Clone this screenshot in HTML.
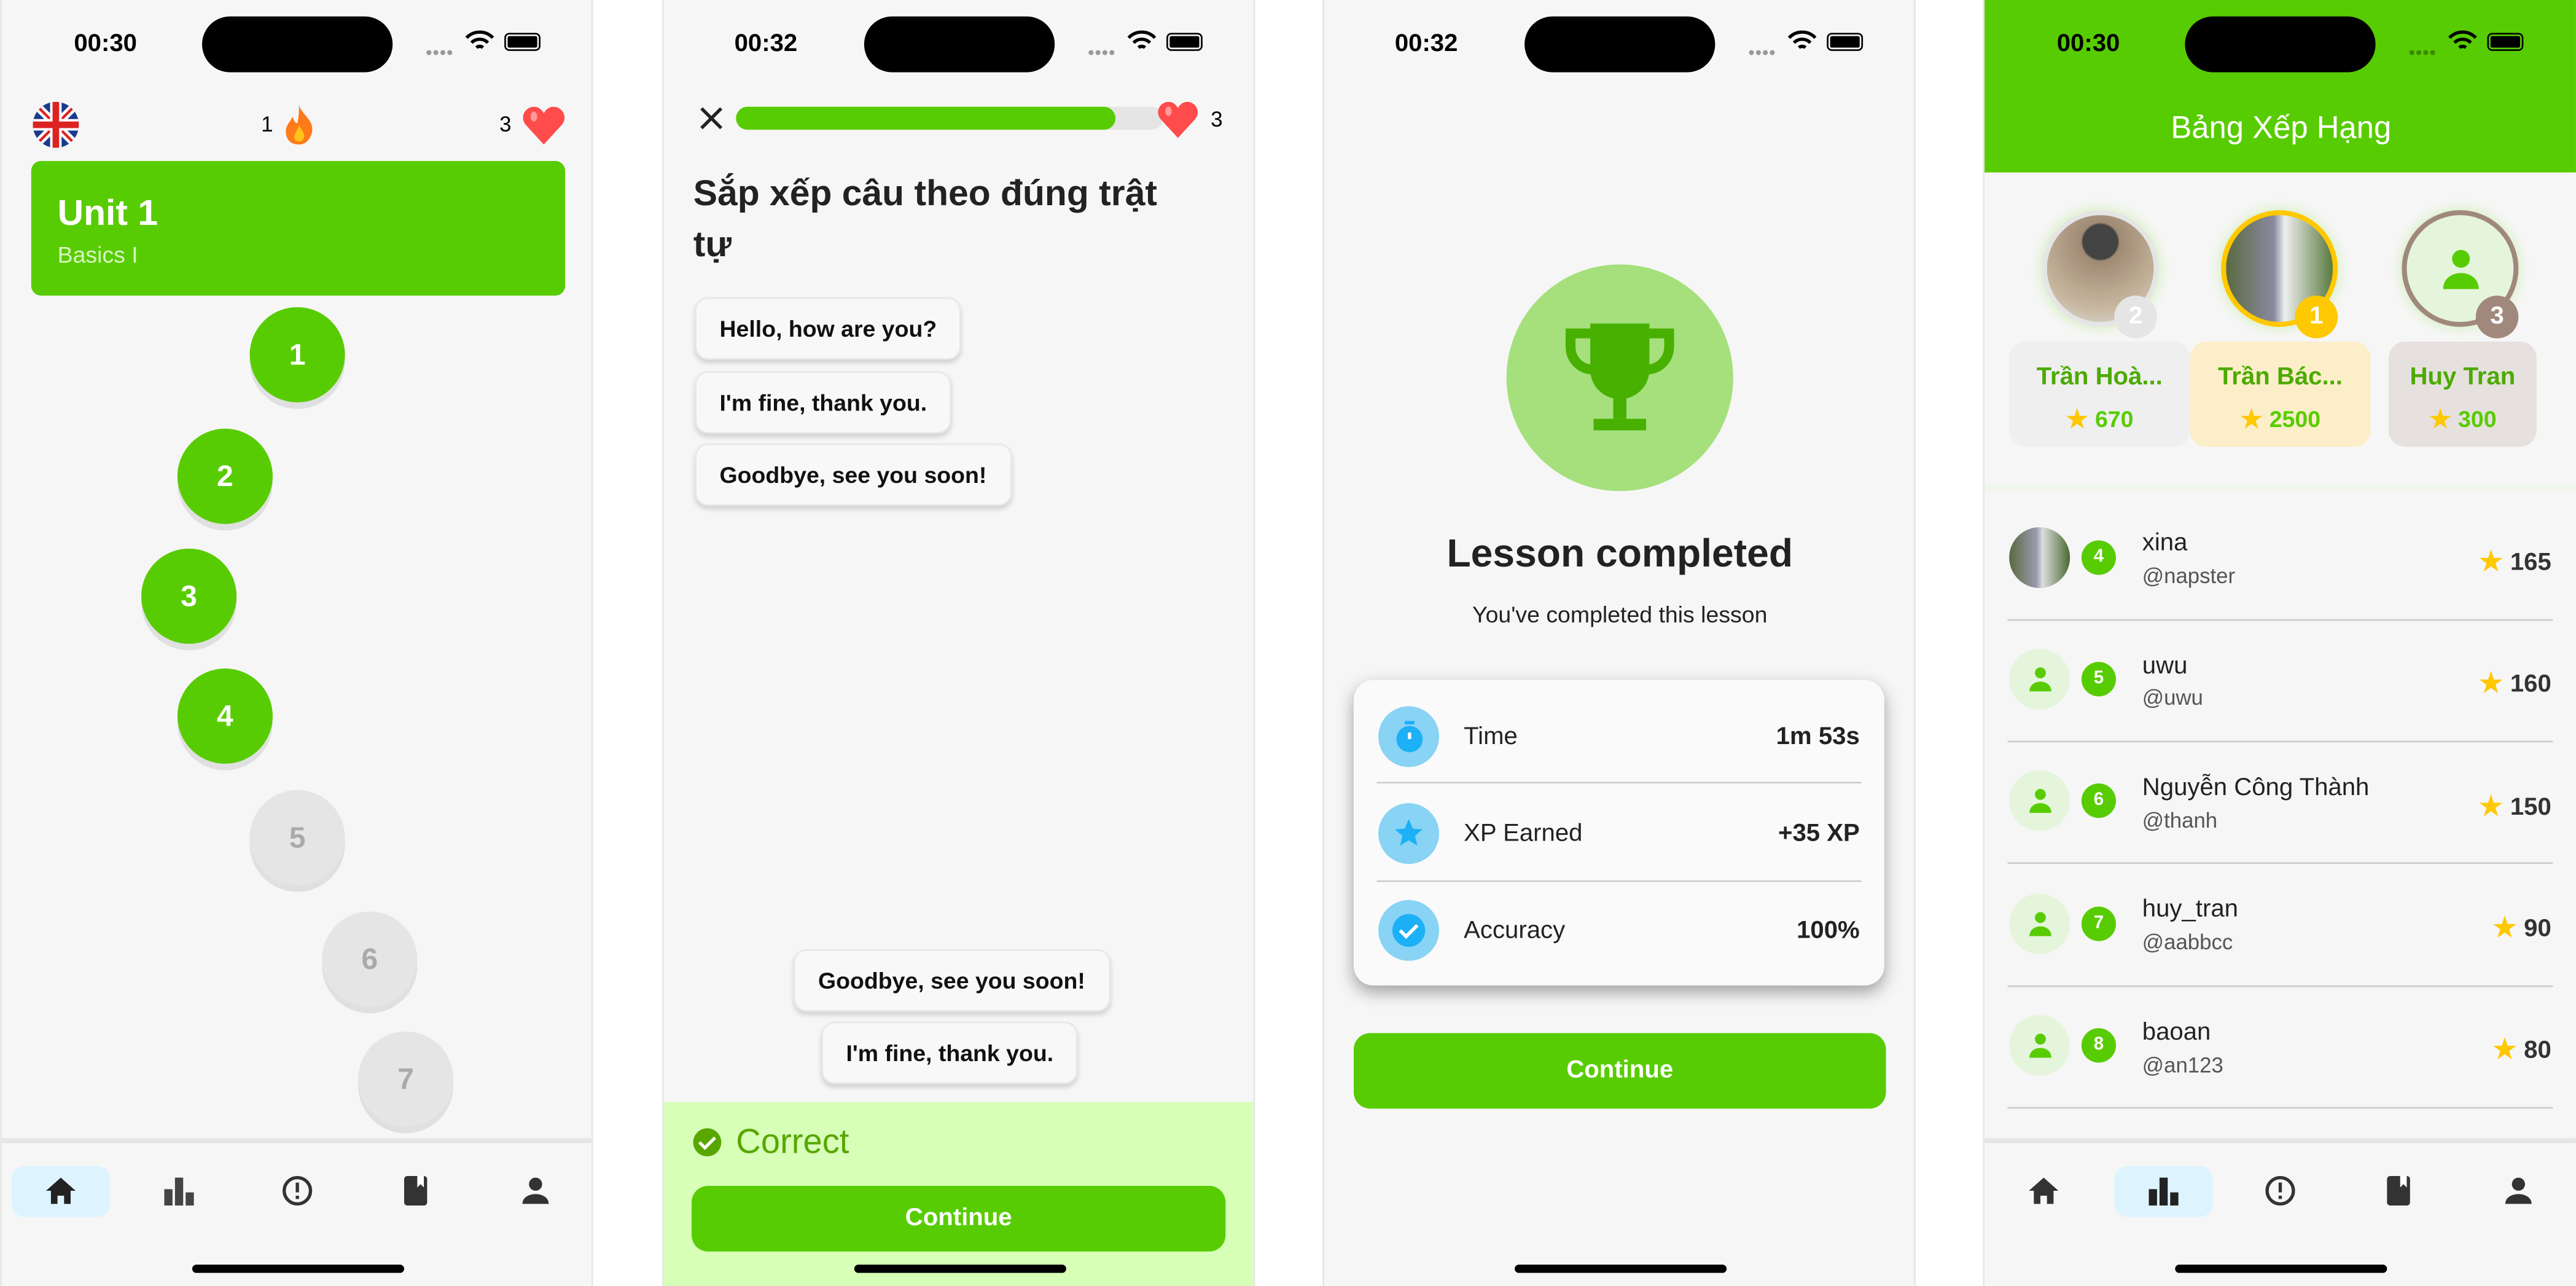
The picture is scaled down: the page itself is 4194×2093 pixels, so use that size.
<!DOCTYPE html>
<html><head><meta charset="utf-8"><style>
*{margin:0;padding:0;box-sizing:border-box}
html,body{width:4194px;height:2093px;overflow:hidden;background:#fff}
#w{position:absolute;left:0;top:0;width:1568px;height:783px;transform:scale(2.6747,2.6731);transform-origin:0 0;font-family:"Liberation Sans","Noto Sans CJK SC",sans-serif}
.p{position:absolute;top:0;width:361px;height:783px;background:#f6f6f6;overflow:hidden;border-left:1px solid #e6e6e6;border-right:1px solid #e6e6e6}
.a{position:absolute}
.time{position:absolute;top:18px;font-size:15px;font-weight:bold;color:#000}
.isl{position:absolute;left:122px;top:10px;width:116px;height:34px;border-radius:17px;background:#000}
.sig{position:absolute;left:258px;top:29px;font-size:7px;color:#999;letter-spacing:0px}
.bat{position:absolute;left:306px;top:20px;width:22px;height:11px;border:1.5px solid #000;border-radius:3px;padding:1px}
.bat i{display:block;width:100%;height:100%;background:#000;border-radius:1px}
.c{position:absolute;width:58px;height:58px;border-radius:50%;background:#58cc02;color:#fff;font-weight:bold;font-size:18px;display:flex;align-items:center;justify-content:center;box-shadow:0 4px 0 #e0e0e0}
.c.g{background:#e5e5e5;color:#aaa}
.nav{position:absolute;left:0;top:693px;width:361px;height:90px;background:#f6f6f6;border-top:3px solid #e5e5e5}
.hb{position:absolute;left:116px;top:770px;width:129px;height:5px;border-radius:3px;background:#000}
.chip{position:absolute;background:#f8f8f8;border-radius:8px;box-shadow:0 2px 3px rgba(0,0,0,.15);border:1px solid #e8e8e8;font-size:14px;font-weight:bold;color:#111;padding:0 14px;height:38px;line-height:36px}
.row{position:absolute;left:14px;width:332px;height:74px;border-bottom:1px solid #ccc}
</style></head><body><div id="w">

<!-- Panel 1 -->
<div class="p" style="left:0">
<div class="time" style="left:44px">00:30</div><div class="isl"></div><div class="sig">●●●●</div>
<svg class="a" style="left:282px;top:18px" width="18" height="14" viewBox="0 0 18 14"><path d="M1 5a11 11 0 0 1 16 0M4 8a7 7 0 0 1 10 0M7 11a3 3 0 0 1 4 0" stroke="#000" stroke-width="2" fill="none"/></svg>
<div class="bat"><i></i></div>
<svg class="a" style="left:19px;top:62px" width="28" height="28" viewBox="0 0 28 28"><clipPath id="cc"><circle cx="14" cy="14" r="14"/></clipPath><g clip-path="url(#cc)"><rect width="28" height="28" fill="#1a3a8a"/><path d="M0 0L28 28M28 0L0 28" stroke="#fff" stroke-width="5"/><path d="M0 0L28 28M28 0L0 28" stroke="#d22" stroke-width="1.6"/><path d="M14 0V28M0 14H28" stroke="#fff" stroke-width="7"/><path d="M14 0V28M0 14H28" stroke="#d22" stroke-width="4"/></g></svg>
<div class="a" style="left:158px;top:68px;font-size:13px">1</div>
<svg class="a" style="left:171px;top:64px" width="20" height="24" viewBox="0 0 20 24"><path d="M10 0C12 6 19 9 18 16C17 21 14 24 10 24C5 24 2 21 2 16C2 12 5 10 6 7C7 10 8 11 9 11C10 7 10 3 10 0Z" fill="#ff7a1a"/><path d="M10 12C11 15 14 17 13 20C12 23 8 23 7 20C7 17 9 16 10 12Z" fill="#ffc21a"/></svg>
<div class="a" style="left:303px;top:68px;font-size:13px">3</div>
<svg class="a" style="left:317px;top:65px" width="26" height="23" viewBox="0 0 26 23"><path d="M13 23L2 11C-2 6 2 0 7 0C10 0 12 2 13 4C14 2 16 0 19 0C24 0 28 6 24 11Z" fill="#ff4b4b"/><ellipse cx="7" cy="6" rx="2" ry="3" fill="#ff9a9a"/></svg>
<div class="a" style="left:18px;top:98px;width:325px;height:82px;background:#58cc02;border-radius:6px"></div>
<div class="a" style="left:34px;top:117px;font-size:22px;font-weight:bold;color:#fff">Unit 1</div>
<div class="a" style="left:34px;top:147px;font-size:14px;color:#d8f5c0">Basics I</div>
<div class="c" style="left:151px;top:187px">1</div>
<div class="c" style="left:107px;top:261px">2</div>
<div class="c" style="left:85px;top:334px">3</div>
<div class="c" style="left:107px;top:407px">4</div>
<div class="c g" style="left:151px;top:481px">5</div>
<div class="c g" style="left:195px;top:555px">6</div>
<div class="c g" style="left:217px;top:628px">7</div>
<div class="nav">
<div class="a" style="left:6px;top:14px;width:60px;height:31px;border-radius:8px;background:#ddf4ff"></div>
<svg class="a" style="left:26px;top:20px" width="20" height="18" viewBox="0 0 20 18"><path d="M10 1L1 9h3v8h4v-5h4v5h4V9h3Z" fill="#222"/></svg>
<svg class="a" style="left:98px;top:20px" width="20" height="18" viewBox="0 0 20 18"><path d="M1 8h5v10H1ZM7.5 1h5v17h-5ZM14 10h5v8h-5Z" fill="#444"/></svg>
<svg class="a" style="left:170px;top:19px" width="20" height="20" viewBox="0 0 20 20"><circle cx="10" cy="10" r="8" stroke="#333" stroke-width="2" fill="none"/><path d="M10 5v6M10 13v2" stroke="#333" stroke-width="2"/></svg>
<svg class="a" style="left:244px;top:19px" width="16" height="20" viewBox="0 0 16 20"><rect x="1" y="1" width="14" height="18" rx="2" fill="#333"/><path d="M9 1v7l2-2 2 2V1" fill="#fff"/></svg>
<svg class="a" style="left:316px;top:20px" width="18" height="18" viewBox="0 0 18 18"><circle cx="9" cy="5" r="4" fill="#333"/><path d="M1 17c0-4 4-6 8-6s8 2 8 6Z" fill="#333"/></svg>
</div>
<div class="hb"></div>
</div>

<!-- Panel 2 -->
<div class="p" style="left:403px">
<div class="time" style="left:43px">00:32</div><div class="isl"></div><div class="sig">●●●●</div>
<svg class="a" style="left:282px;top:18px" width="18" height="14" viewBox="0 0 18 14"><path d="M1 5a11 11 0 0 1 16 0M4 8a7 7 0 0 1 10 0M7 11a3 3 0 0 1 4 0" stroke="#000" stroke-width="2" fill="none"/></svg>
<div class="bat"><i></i></div>
<svg class="a" style="left:22px;top:65px" width="14" height="14" viewBox="0 0 14 14"><path d="M1 1L13 13M13 1L1 13" stroke="#222" stroke-width="2"/></svg>
<div class="a" style="left:44px;top:65px;width:260px;height:14px;border-radius:7px;background:#e5e5e5"></div>
<div class="a" style="left:44px;top:65px;width:231px;height:14px;border-radius:7px;background:#58cc02"></div>
<svg class="a" style="left:300px;top:62px" width="26" height="22" viewBox="0 0 26 23"><path d="M13 23L2 11C-2 6 2 0 7 0C10 0 12 2 13 4C14 2 16 0 19 0C24 0 28 6 24 11Z" fill="#ff4b4b"/><ellipse cx="7" cy="6" rx="2" ry="3" fill="#ff9a9a"/></svg>
<div class="a" style="left:333px;top:65px;font-size:13px">3</div>
<div class="a" style="left:18px;top:102px;width:300px;font-size:22px;font-weight:bold;line-height:31px;color:#222">Sắp xếp câu theo đúng trật tự</div>
<div class="chip" style="left:19px;top:181px">Hello, how are you?</div>
<div class="chip" style="left:19px;top:226px">I'm fine, thank you.</div>
<div class="chip" style="left:19px;top:270px">Goodbye, see you soon!</div>
<div class="chip" style="left:79px;top:578px">Goodbye, see you soon!</div>
<div class="chip" style="left:96px;top:622px">I'm fine, thank you.</div>
<div class="a" style="left:0;top:671px;width:361px;height:112px;background:#d7ffb8"></div>
<svg class="a" style="left:17px;top:686px" width="19" height="19" viewBox="0 0 20 20"><circle cx="10" cy="10" r="9" fill="#58a700"/><path d="M5 10l3.5 3.5L15 7" stroke="#fff" stroke-width="2" fill="none"/></svg>
<div class="a" style="left:44px;top:684px;font-size:21px;color:#58a700">Correct</div>
<div class="a" style="left:17px;top:722px;width:325px;height:40px;border-radius:10px;background:#58cc02;color:#fff;font-size:15px;font-weight:bold;text-align:center;line-height:40px">Continue</div>
<div class="hb"></div>
</div>

<!-- Panel 3 -->
<div class="p" style="left:805px">
<div class="time" style="left:43px">00:32</div><div class="isl"></div><div class="sig">●●●●</div>
<svg class="a" style="left:282px;top:18px" width="18" height="14" viewBox="0 0 18 14"><path d="M1 5a11 11 0 0 1 16 0M4 8a7 7 0 0 1 10 0M7 11a3 3 0 0 1 4 0" stroke="#000" stroke-width="2" fill="none"/></svg>
<div class="bat"><i></i></div>
<div class="a" style="left:111px;top:161px;width:138px;height:138px;border-radius:50%;background:#a5e07c"></div>
<svg class="a" style="left:144px;top:193px" width="72" height="74" viewBox="0 0 72 74"><path d="M18 4h36v28c0 10-8 18-18 18S18 42 18 32Z" fill="#48b000"/><path d="M18 10H6v8c0 8 6 14 14 14M54 10h12v8c0 8-6 14-14 14" stroke="#48b000" stroke-width="6" fill="none"/><rect x="32" y="48" width="8" height="14" fill="#48b000"/><rect x="20" y="62" width="32" height="7" fill="#48b000"/></svg>
<div class="a" style="left:0;top:324px;width:360px;text-align:center;font-size:24px;font-weight:bold;color:#222">Lesson completed</div>
<div class="a" style="left:0;top:366px;width:360px;text-align:center;font-size:14px;color:#222">You've completed this lesson</div>
<div class="a" style="left:18px;top:414px;width:323px;height:186px;background:#fafafa;border-radius:12px;box-shadow:0 4px 10px rgba(0,0,0,.35)"></div>
<div class="a" style="left:32px;top:476px;width:295px;border-top:1px solid #ccc"></div>
<div class="a" style="left:32px;top:536px;width:295px;border-top:1px solid #ccc"></div>
<div class="a" style="left:33px;top:430px;width:37px;height:37px;border-radius:50%;background:#89d3f4"></div>
<svg class="a" style="left:42px;top:438px" width="20" height="21" viewBox="0 0 20 21"><circle cx="10" cy="12" r="8" fill="#1cb0f6"/><rect x="7" y="1" width="6" height="2" fill="#1cb0f6"/><path d="M10 12V8" stroke="#fff" stroke-width="2"/></svg>
<div class="a" style="left:33px;top:489px;width:37px;height:37px;border-radius:50%;background:#89d3f4"></div>
<svg class="a" style="left:41px;top:497px" width="21" height="20" viewBox="0 0 24 24"><path d="M12 2l3 7 7 .6-5.4 4.7 1.7 7.1L12 17.6 5.7 21.4l1.7-7.1L2 9.6 9 9Z" fill="#1cb0f6"/></svg>
<div class="a" style="left:33px;top:548px;width:37px;height:37px;border-radius:50%;background:#89d3f4"></div>
<svg class="a" style="left:41px;top:556px" width="21" height="21" viewBox="0 0 20 20"><circle cx="10" cy="10" r="9.5" fill="#1cb0f6"/><path d="M5 10l3.5 3.5L15 7" stroke="#fff" stroke-width="2" fill="none"/></svg>
<div class="a" style="left:85px;top:440px;font-size:15px;color:#222">Time</div>
<div class="a" style="left:85px;top:499px;font-size:15px;color:#222">XP Earned</div>
<div class="a" style="left:85px;top:558px;font-size:15px;color:#222">Accuracy</div>
<div class="a" style="right:33px;top:440px;font-size:15px;font-weight:bold;color:#222">1m 53s</div>
<div class="a" style="right:33px;top:499px;font-size:15px;font-weight:bold;color:#222">+35 XP</div>
<div class="a" style="right:33px;top:558px;font-size:15px;font-weight:bold;color:#222">100%</div>
<div class="a" style="left:18px;top:629px;width:324px;height:46px;border-radius:10px;background:#58cc02;color:#fff;font-size:15px;font-weight:bold;text-align:center;line-height:46px">Continue</div>
<div class="hb"></div>
</div>

<!-- Panel 4 -->
<div class="p" style="left:1207px;border-right:none">
<div class="a" style="left:0;top:0;width:361px;height:105px;background:#58cc02"></div>
<div class="time" style="left:44px">00:30</div><div class="isl"></div><div class="sig" style="color:#3a8a00">●●●●</div>
<svg class="a" style="left:282px;top:18px" width="18" height="14" viewBox="0 0 18 14"><path d="M1 5a11 11 0 0 1 16 0M4 8a7 7 0 0 1 10 0M7 11a3 3 0 0 1 4 0" stroke="#000" stroke-width="2" fill="none"/></svg>
<div class="bat"><i></i></div>
<div class="a" style="left:0;top:68px;width:361px;text-align:center;font-size:19px;color:#fff">Bảng Xếp Hạng</div>
<!-- podium -->
<div class="a" style="left:15px;top:208px;width:110px;height:64px;border-radius:10px;background:#efefef"></div>
<div class="a" style="left:125px;top:208px;width:110px;height:64px;border-radius:10px;background:#fbeec8"></div>
<div class="a" style="left:246px;top:208px;width:90px;height:64px;border-radius:10px;background:#e6e1de"></div>
<div class="a" style="left:35px;top:128px;width:71px;height:71px;border-radius:50%;border:3px solid #e5e5e5;background:radial-gradient(circle at 50% 25%,#444 0 18%,#a08a74 20%,#c8b8a0 70%,#ddd 100%);box-shadow:0 0 8px #cdeeb0"></div>
<div class="a" style="left:144px;top:128px;width:71px;height:71px;border-radius:50%;border:3px solid #ffc800;background:linear-gradient(90deg,#5a6a40,#8a8aa0 45%,#eee 55%,#5a7a40);box-shadow:0 0 8px #cdeeb0"></div>
<div class="a" style="left:254px;top:128px;width:71px;height:71px;border-radius:50%;border:3px solid #a0887c;background:#e5f5dc;box-shadow:0 0 8px #cdeeb0"></div>
<svg class="a" style="left:279px;top:150px" width="22" height="26" viewBox="0 0 20 24"><circle cx="10" cy="7" r="5" fill="#58cc02"/><path d="M0 24c0-6 5-9 10-9s10 3 10 9Z" fill="#58cc02"/></svg>
<div class="a" style="left:79px;top:180px;width:26px;height:26px;border-radius:50%;background:#e5e5e5;color:#fff;font-weight:bold;font-size:15px;text-align:center;line-height:26px">2</div>
<div class="a" style="left:189px;top:180px;width:26px;height:26px;border-radius:50%;background:#ffc800;color:#fff;font-weight:bold;font-size:15px;text-align:center;line-height:26px">1</div>
<div class="a" style="left:299px;top:180px;width:26px;height:26px;border-radius:50%;background:#a0887c;color:#fff;font-weight:bold;font-size:15px;text-align:center;line-height:26px">3</div>
<div class="a" style="left:15px;top:221px;width:110px;text-align:center;font-size:15px;font-weight:bold;color:#4caa00">Trần Hoà...</div>
<div class="a" style="left:125px;top:221px;width:110px;text-align:center;font-size:15px;font-weight:bold;color:#4caa00">Trần Bác...</div>
<div class="a" style="left:246px;top:221px;width:90px;text-align:center;font-size:15px;font-weight:bold;color:#4caa00">Huy Tran</div>
<div class="a" style="left:15px;top:245px;width:110px;text-align:center;font-size:14px;font-weight:bold;color:#58cc02"><span style="color:#ffc800">★</span> 670</div>
<div class="a" style="left:125px;top:245px;width:110px;text-align:center;font-size:14px;font-weight:bold;color:#58cc02"><span style="color:#ffc800">★</span> 2500</div>
<div class="a" style="left:246px;top:245px;width:90px;text-align:center;font-size:14px;font-weight:bold;color:#58cc02"><span style="color:#ffc800">★</span> 300</div>
<div class="a" style="left:0;top:295px;width:361px;height:6px;background:linear-gradient(#eef7e8,#f6f6f6)"></div>
<!-- list -->
<div class="row" style="top:304px"></div>
<div class="row" style="top:378px"></div>
<div class="row" style="top:452px"></div>
<div class="row" style="top:527px"></div>
<div class="row" style="top:601px"></div>
<div class="a" style="left:15px;top:321px;width:37px;height:37px;border-radius:50%;background:linear-gradient(90deg,#5a6a40,#9a9ab0 45%,#ddd 55%,#4a6a30)"></div>
<div class="a" style="left:15px;top:395px;width:37px;height:37px;border-radius:50%;background:#e5f5dc"></div>
<div class="a" style="left:15px;top:469px;width:37px;height:37px;border-radius:50%;background:#e5f5dc"></div>
<div class="a" style="left:15px;top:544px;width:37px;height:37px;border-radius:50%;background:#e5f5dc"></div>
<div class="a" style="left:15px;top:618px;width:37px;height:37px;border-radius:50%;background:#e5f5dc"></div>
<svg class="a" style="left:27px;top:405px" width="14" height="16" viewBox="0 0 20 24"><circle cx="10" cy="7" r="5" fill="#58cc02"/><path d="M0 24c0-6 5-9 10-9s10 3 10 9Z" fill="#58cc02"/></svg>
<svg class="a" style="left:27px;top:479px" width="14" height="16" viewBox="0 0 20 24"><circle cx="10" cy="7" r="5" fill="#58cc02"/><path d="M0 24c0-6 5-9 10-9s10 3 10 9Z" fill="#58cc02"/></svg>
<svg class="a" style="left:27px;top:554px" width="14" height="16" viewBox="0 0 20 24"><circle cx="10" cy="7" r="5" fill="#58cc02"/><path d="M0 24c0-6 5-9 10-9s10 3 10 9Z" fill="#58cc02"/></svg>
<svg class="a" style="left:27px;top:628px" width="14" height="16" viewBox="0 0 20 24"><circle cx="10" cy="7" r="5" fill="#58cc02"/><path d="M0 24c0-6 5-9 10-9s10 3 10 9Z" fill="#58cc02"/></svg>
<div class="a" style="left:59px;top:329px;width:21px;height:21px;border-radius:50%;background:#58cc02;color:#fff;font-size:11px;font-weight:bold;text-align:center;line-height:21px">4</div>
<div class="a" style="left:59px;top:403px;width:21px;height:21px;border-radius:50%;background:#58cc02;color:#fff;font-size:11px;font-weight:bold;text-align:center;line-height:21px">5</div>
<div class="a" style="left:59px;top:477px;width:21px;height:21px;border-radius:50%;background:#58cc02;color:#fff;font-size:11px;font-weight:bold;text-align:center;line-height:21px">6</div>
<div class="a" style="left:59px;top:552px;width:21px;height:21px;border-radius:50%;background:#58cc02;color:#fff;font-size:11px;font-weight:bold;text-align:center;line-height:21px">7</div>
<div class="a" style="left:59px;top:626px;width:21px;height:21px;border-radius:50%;background:#58cc02;color:#fff;font-size:11px;font-weight:bold;text-align:center;line-height:21px">8</div>
<div class="a" style="left:96px;top:322px;font-size:15px;color:#222">xina</div><div class="a" style="left:96px;top:343px;font-size:13px;color:#555">@napster</div>
<div class="a" style="left:96px;top:397px;font-size:15px;color:#222">uwu</div><div class="a" style="left:96px;top:417px;font-size:13px;color:#555">@uwu</div>
<div class="a" style="left:96px;top:471px;font-size:15px;color:#222">Nguyễn Công Thành</div><div class="a" style="left:96px;top:492px;font-size:13px;color:#555">@thanh</div>
<div class="a" style="left:96px;top:545px;font-size:15px;color:#222">huy_tran</div><div class="a" style="left:96px;top:566px;font-size:13px;color:#555">@aabbcc</div>
<div class="a" style="left:96px;top:620px;font-size:15px;color:#222">baoan</div><div class="a" style="left:96px;top:641px;font-size:13px;color:#555">@an123</div>
<div class="a" style="right:15px;top:331px;font-size:15px;font-weight:bold;color:#333"><span style="color:#ffc800">★</span> 165</div>
<div class="a" style="right:15px;top:405px;font-size:15px;font-weight:bold;color:#333"><span style="color:#ffc800">★</span> 160</div>
<div class="a" style="right:15px;top:480px;font-size:15px;font-weight:bold;color:#333"><span style="color:#ffc800">★</span> 150</div>
<div class="a" style="right:15px;top:554px;font-size:15px;font-weight:bold;color:#333"><span style="color:#ffc800">★</span> 90</div>
<div class="a" style="right:15px;top:628px;font-size:15px;font-weight:bold;color:#333"><span style="color:#ffc800">★</span> 80</div>
<div class="nav">
<div class="a" style="left:79px;top:14px;width:60px;height:31px;border-radius:8px;background:#ddf4ff"></div>
<svg class="a" style="left:26px;top:20px" width="20" height="18" viewBox="0 0 20 18"><path d="M10 1L1 9h3v8h4v-5h4v5h4V9h3Z" fill="#333"/></svg>
<svg class="a" style="left:99px;top:20px" width="20" height="18" viewBox="0 0 20 18"><path d="M1 8h5v10H1ZM7.5 1h5v17h-5ZM14 10h5v8h-5Z" fill="#222"/></svg>
<svg class="a" style="left:170px;top:19px" width="20" height="20" viewBox="0 0 20 20"><circle cx="10" cy="10" r="8" stroke="#333" stroke-width="2" fill="none"/><path d="M10 5v6M10 13v2" stroke="#333" stroke-width="2"/></svg>
<svg class="a" style="left:244px;top:19px" width="16" height="20" viewBox="0 0 16 20"><rect x="1" y="1" width="14" height="18" rx="2" fill="#333"/><path d="M9 1v7l2-2 2 2V1" fill="#fff"/></svg>
<svg class="a" style="left:316px;top:20px" width="18" height="18" viewBox="0 0 18 18"><circle cx="9" cy="5" r="4" fill="#333"/><path d="M1 17c0-4 4-6 8-6s8 2 8 6Z" fill="#333"/></svg>
</div>
<div class="hb"></div>
</div>

</div></body></html>
